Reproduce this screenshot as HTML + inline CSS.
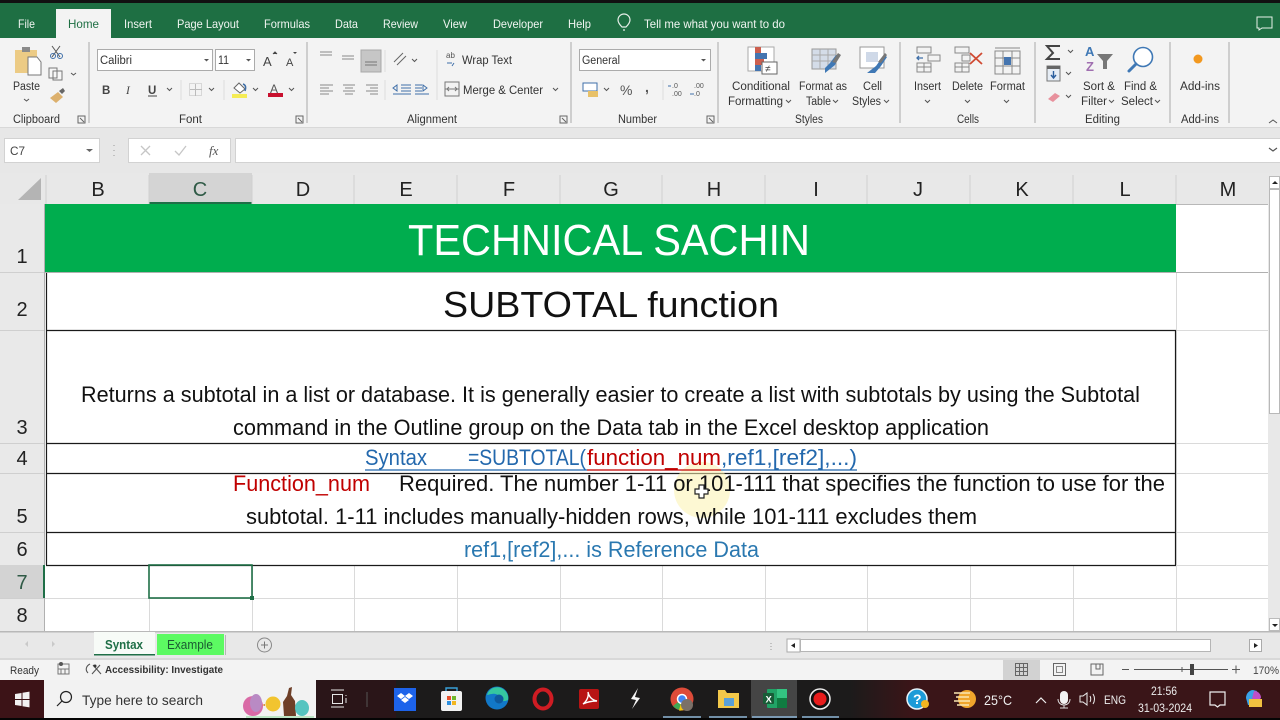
<!DOCTYPE html>
<html><head><meta charset="utf-8"><style>
html,body{margin:0;padding:0;background:#fff;width:1280px;height:720px;overflow:hidden}
svg{display:block;font-family:"Liberation Sans",sans-serif}
.r{font-size:11.5px;fill:#333}
.t{font-size:12px;fill:#f0f5f1}
.c{font-size:24px;fill:#111}
.h{font-size:20px;fill:#222}
.l{stroke:#dadada;stroke-width:1}
.b{stroke:#1a1a1a;stroke-width:1.2}
.i{fill:none;stroke:#666;stroke-width:1}
.ch{fill:none;stroke:#555;stroke-width:1}
</style></head><body>
<svg width="1280" height="720" viewBox="0 0 1280 720" xmlns="http://www.w3.org/2000/svg">
<defs><linearGradient id="tb" x1="0" x2="1" y1="0" y2="0"><stop offset="0" stop-color="#1c1b1b"/><stop offset="1" stop-color="#3a1518"/></linearGradient></defs>
<rect width="1280" height="720" fill="#fff"/>
<!-- title/tabs -->
<rect y="2" width="1280" height="36" fill="#1e6f43"/>
<rect width="1280" height="3" fill="#111"/>
<rect x="56" y="9" width="55" height="30" fill="#f3f3f3"/>
<rect y="38" width="1280" height="89" fill="#f3f3f3"/>
<g class="t">
<text x="18" y="28" textLength="17" lengthAdjust="spacingAndGlyphs">File</text>
<text x="68" y="28" textLength="31" lengthAdjust="spacingAndGlyphs" style="fill:#1e6f43">Home</text>
<text x="124" y="28" textLength="28" lengthAdjust="spacingAndGlyphs">Insert</text>
<text x="177" y="28" textLength="62" lengthAdjust="spacingAndGlyphs">Page Layout</text>
<text x="264" y="28" textLength="46" lengthAdjust="spacingAndGlyphs">Formulas</text>
<text x="335" y="28" textLength="23" lengthAdjust="spacingAndGlyphs">Data</text>
<text x="383" y="28" textLength="35" lengthAdjust="spacingAndGlyphs">Review</text>
<text x="443" y="28" textLength="24" lengthAdjust="spacingAndGlyphs">View</text>
<text x="493" y="28" textLength="50" lengthAdjust="spacingAndGlyphs">Developer</text>
<text x="568" y="28" textLength="23" lengthAdjust="spacingAndGlyphs">Help</text>
<text x="644" y="28" textLength="141" lengthAdjust="spacingAndGlyphs">Tell me what you want to do</text>
</g>
<path d="M622 27c-3-3-4-5-4-7a6 6 0 0 1 12 0c0 2-1 4-4 7zM623 30h2" fill="none" stroke="#e8f0ea" stroke-width="1.2"/>
<path d="M1257 17h15v11h-10l-3 2v-2h-2z" fill="none" stroke="#e8f0ea" stroke-width="1"/>
<!-- ribbon separators -->
<g stroke="#b5b5b5" stroke-width="1.2">
<path d="M89 42v81M307 42v81M571 42v81M718 42v81M900 42v81M1035 42v81M1170 42v81M1229 42v81"/>
</g>
<g stroke="#dcdcdc"><path d="M385 50v22M385 80v20M181 80v20M224 80v20M437 50v50M663 80v20"/></g>
<!-- Clipboard -->
<rect x="15" y="50" width="22" height="23" fill="#eccb85"/>
<rect x="22" y="47" width="8" height="5" fill="#8a8a8a"/>
<path d="M28 57h9l4 5v13H28z" fill="#fff" stroke="#777"/>
<text class="r" x="13" y="90" textLength="27" lengthAdjust="spacingAndGlyphs">Paste</text>
<path class="ch" d="M24 99l2.500 2 2.500-2"/>
<path d="M52 46l8 11M60 46l-8 11" stroke="#555" fill="none"/>
<circle cx="53" cy="56" r="2.500" fill="none" stroke="#3f6fa8"/><circle cx="60" cy="56" r="2.500" fill="none" stroke="#3f6fa8"/>
<path d="M49 68h8v10h-8zM53 71h9v9h-9z" fill="#f7f7f7" stroke="#777"/>
<path class="ch" d="M71 73l2.500 2 2.500-2"/>
<path d="M50 98l8-6 5 5-7 6z" fill="#dcb06d"/><path d="M59 91l4-3 2 3-3 3z" fill="#666"/>
<text class="r" x="13" y="123" textLength="47" lengthAdjust="spacingAndGlyphs">Clipboard</text>
<path d="M78 116h7v7h-7zM80 118l4 4" fill="none" stroke="#666"/>
<!-- Font -->
<rect x="97.500" y="49.500" width="115" height="21" fill="#fff" stroke="#ababab"/>
<text class="r" x="100" y="64" textLength="32" lengthAdjust="spacingAndGlyphs">Calibri</text>
<path d="M204 59l2.500 2.500 2.500-2.500z" fill="#555"/>
<rect x="215.500" y="49.500" width="39" height="21" fill="#fff" stroke="#ababab"/>
<text class="r" x="218" y="64" textLength="11" lengthAdjust="spacingAndGlyphs">11</text>
<path d="M246 59l2.500 2.500 2.500-2.500z" fill="#555"/>
<text x="263" y="66" font-size="13" fill="#444">A</text><path d="M273 54l2-2 2 2" fill="#444" stroke="#444"/>
<text x="286" y="66" font-size="11" fill="#444">A</text><path d="M293 52h4l-2 2z" fill="#444"/>
<text x="102" y="94" font-size="11.500" font-weight="bold" fill="#444">B</text>
<text x="126" y="94" font-size="11.500" font-style="italic" font-family="Liberation Serif" fill="#444">I</text>
<text x="148" y="94" font-size="11.500" fill="#444" font-weight="bold">U</text><path d="M148 96h9" stroke="#444"/>
<path class="ch" d="M167 88l2.500 2.500 2.500-2.500M209 88l2.500 2.500 2.500-2.500M253 88l2.500 2.500 2.500-2.500M289 88l2.500 2.500 2.500-2.500"/>
<rect x="189.500" y="83.500" width="12" height="12" fill="none" stroke="#bbb" stroke-dasharray="1 1"/><path d="M195.500 84v12M190 89.500h12" stroke="#bbb"/>
<path d="M234 88l5-5 6 6-5 4z" fill="#fff" stroke="#666"/><path d="M243 84c3 1 3 4 2 7" stroke="#3f6fa8" stroke-width="1.500" fill="none"/>
<rect x="232" y="94" width="15" height="4" fill="#f5ec55"/>
<text x="270" y="93" font-size="12" fill="#555">A</text><rect x="268" y="93" width="15" height="4" fill="#c8102e"/>
<text class="r" x="179" y="123" textLength="23" lengthAdjust="spacingAndGlyphs">Font</text>
<path d="M296 116h7v7h-7zM298 118l4 4" fill="none" stroke="#666"/>
<!-- Alignment -->
<g stroke="#8a8a8a" fill="none">
<path d="M320 52h12M320 55h12M342 56h12M342 59h12"/>
<path d="M320 85h13M320 88h9M320 91h13M320 94h9M343 85h12M345 88h8M343 91h12M345 94h8M366 85h12M370 88h8M366 91h12M370 94h8"/>
</g>
<rect x="361" y="50" width="20" height="22" fill="#c6c6c6" stroke="#a8a8a8"/>
<path d="M365 62h12M365 65h12" stroke="#777"/>
<path d="M394 62l9-9M397 65l9-9" stroke="#666" fill="none"/><path d="M412 59l2.500 2.500 2.500-2.500" class="ch"/>
<path d="M393 88l4-3v6zM401 85h10M401 88h10M401 91h10M393 94h18" stroke="#3f6fa8" fill="none"/>
<path d="M427 88l-4-3v6zM415 85h7M415 88h7M415 91h7M415 94h14" stroke="#3f6fa8" fill="none"/>
<text x="446" y="58" font-size="8" fill="#555">ab</text><path d="M447 63h5M454 63l-2 3" stroke="#3f6fa8" fill="none"/>
<text class="r" x="462" y="64" textLength="50" lengthAdjust="spacingAndGlyphs">Wrap Text</text>
<rect x="445" y="82" width="14" height="14" fill="none" stroke="#777"/><path d="M445 89h14M449 87l-2 2 2 2M455 87l2 2-2 2" stroke="#777" fill="none"/>
<text class="r" x="463" y="94" textLength="80" lengthAdjust="spacingAndGlyphs">Merge &amp; Center</text>
<path class="ch" d="M553 88l2.500 2.500 2.500-2.500"/>
<text class="r" x="407" y="123" textLength="50" lengthAdjust="spacingAndGlyphs">Alignment</text>
<path d="M560 116h7v7h-7zM562 118l4 4" fill="none" stroke="#666"/>
<!-- Number -->
<rect x="579.500" y="49.500" width="131" height="21" fill="#fff" stroke="#ababab"/>
<text class="r" x="582" y="64" textLength="38" lengthAdjust="spacingAndGlyphs">General</text>
<path d="M701 59l2.500 2.500 2.500-2.500z" fill="#555"/>
<rect x="583" y="83" width="14" height="8" fill="#fff" stroke="#3f6fa8"/><rect x="588" y="91" width="10" height="6" fill="#e8c168"/>
<path class="ch" d="M604 88l2.500 2.500 2.500-2.500"/>
<text x="620" y="95" font-size="14" fill="#555">%</text>
<text x="645" y="92" font-size="14" font-weight="bold" fill="#555">,</text>
<text x="672" y="88" font-size="7" fill="#555">.0</text><text x="672" y="96" font-size="7" fill="#555">.00</text>
<text x="694" y="88" font-size="7" fill="#555">.00</text><text x="694" y="96" font-size="7" fill="#555">.0</text>
<path d="M671 86h-3M690 94h4" stroke="#3f6fa8"/>
<text class="r" x="618" y="123" textLength="39" lengthAdjust="spacingAndGlyphs">Number</text>
<path d="M707 116h7v7h-7zM709 118l4 4" fill="none" stroke="#666"/>
<!-- Styles -->
<rect x="748" y="47" width="26" height="24" fill="#fff" stroke="#aaa"/>
<rect x="755" y="47" width="6" height="6" fill="#cc5f4f"/><rect x="755" y="53" width="12" height="6" fill="#4575b0"/><rect x="755" y="59" width="9" height="6" fill="#cc5f4f"/><rect x="755" y="65" width="6" height="6" fill="#4575b0"/>
<rect x="762" y="62" width="15" height="12" fill="#fff" stroke="#666"/><text x="765" y="72" font-size="10" fill="#444">≠</text>
<text class="r" x="732" y="90" textLength="58" lengthAdjust="spacingAndGlyphs">Conditional</text>
<text class="r" x="728" y="105" textLength="55" lengthAdjust="spacingAndGlyphs">Formatting</text><path class="ch" d="M786 100l2.500 2.500 2.500-2.500"/>
<rect x="812" y="49" width="24" height="20" fill="#d4dce8" stroke="#999"/><path d="M812 55h24M812 61h24M820 49v20M828 49v20" stroke="#aaa"/>
<path d="M825 73l10-8 4-9 -3-1-6 8-5 5z" fill="#3f78b5"/><path d="M832 62l6-9 3 2-5 8z" fill="#777"/>
<text class="r" x="799" y="90" textLength="48" lengthAdjust="spacingAndGlyphs">Format as</text>
<text class="r" x="806" y="105" textLength="25" lengthAdjust="spacingAndGlyphs">Table</text><path class="ch" d="M833 100l2.500 2.500 2.500-2.500"/>
<rect x="860" y="47" width="24" height="21" fill="#fff" stroke="#999"/><rect x="866" y="52" width="12" height="10" fill="#cfd9e8"/>
<path d="M867 73l9-7 8-11 3 2-6 9-6 7z" fill="#3f78b5"/><path d="M878 62l7-9 2 2-6 8z" fill="#777"/>
<text class="r" x="863" y="90" textLength="19" lengthAdjust="spacingAndGlyphs">Cell</text>
<text class="r" x="852" y="105" textLength="29" lengthAdjust="spacingAndGlyphs">Styles</text><path class="ch" d="M884 100l2.500 2.500 2.500-2.500"/>
<text class="r" x="795" y="123" textLength="28" lengthAdjust="spacingAndGlyphs">Styles</text>
<!-- Cells -->
<g fill="none" stroke="#888">
<rect x="917" y="47" width="14" height="6"/><rect x="928" y="55" width="12" height="6"/><rect x="917" y="63" width="14" height="9"/><path d="M924 63v9M917 67h14"/>
<rect x="955" y="47" width="14" height="6"/><rect x="962" y="55" width="8" height="6"/><rect x="955" y="63" width="14" height="9"/><path d="M962 63v9M955 67h14"/>
<rect x="995" y="51" width="25" height="23"/><path d="M995 48h25M1003 51v23M1012 51v23M995 58h25M995 66h25"/>
</g>
<path d="M923 58h-6M919 56l-2 2 2 2" stroke="#3f6fa8" fill="none" stroke-width="1.300"/>
<path d="M970 53l12 11M982 53l-12 11" stroke="#d04a32" stroke-width="1.800"/>
<rect x="1004" y="57" width="7" height="8" fill="#4575b0"/>
<text class="r" x="914" y="90" textLength="27" lengthAdjust="spacingAndGlyphs">Insert</text>
<text class="r" x="952" y="90" textLength="31" lengthAdjust="spacingAndGlyphs">Delete</text>
<text class="r" x="990" y="90" textLength="35" lengthAdjust="spacingAndGlyphs">Format</text>
<path class="ch" d="M925 100l2.500 2.500 2.500-2.500M965 100l2.500 2.500 2.500-2.500M1004 100l2.500 2.500 2.500-2.500"/>
<text class="r" x="957" y="123" textLength="22" lengthAdjust="spacingAndGlyphs">Cells</text>
<!-- Editing -->
<path d="M1060 46h-13l6 7-6 6h13" fill="none" stroke="#444" stroke-width="2"/>
<path class="ch" d="M1068 50l2.500 2.500 2.500-2.500M1066 72l2.500 2.500 2.500-2.500M1066 95l2.500 2.500 2.500-2.500"/>
<rect x="1047" y="66" width="13" height="15" fill="#e6edf5" stroke="#777"/><rect x="1047" y="66" width="13" height="3" fill="#666"/><path d="M1053.500 71v7M1051 75l2.500 3 2.500-3" stroke="#2c5f9e" fill="none" stroke-width="1.400"/>
<path d="M1048 99l7-6 5 3-7 6z" fill="#e8919d"/>
<text x="1085" y="56" font-size="13" fill="#3f78b5" font-weight="bold">A</text><text x="1086" y="71" font-size="13" fill="#a06fb0" font-weight="bold">Z</text>
<path d="M1097 54h16l-6 7v8h-4v-8z" fill="#777"/>
<text class="r" x="1083" y="90" textLength="32" lengthAdjust="spacingAndGlyphs">Sort &amp;</text>
<text class="r" x="1081" y="105" textLength="26" lengthAdjust="spacingAndGlyphs">Filter</text><path class="ch" d="M1109 100l2.500 2.500 2.500-2.500"/>
<circle cx="1143" cy="57" r="9.500" fill="#fff" stroke="#3f78b5" stroke-width="1.600"/><path d="M1136 64l-7 7" stroke="#3f78b5" stroke-width="3" stroke-linecap="round"/>
<text class="r" x="1124" y="90" textLength="33" lengthAdjust="spacingAndGlyphs">Find &amp;</text>
<text class="r" x="1121" y="105" textLength="32" lengthAdjust="spacingAndGlyphs">Select</text><path class="ch" d="M1155 100l2.500 2.500 2.500-2.500"/>
<text class="r" x="1085" y="123" textLength="35" lengthAdjust="spacingAndGlyphs">Editing</text>
<!-- Add-ins -->
<circle cx="1198" cy="59" r="4.500" fill="#f2981f"/>
<text class="r" x="1180" y="90" textLength="40" lengthAdjust="spacingAndGlyphs">Add-ins</text>
<text class="r" x="1181" y="123" textLength="38" lengthAdjust="spacingAndGlyphs">Add-ins</text>
<path d="M1269 123l4-3 4 3" fill="none" stroke="#555"/>
<!-- formula bar -->
<rect y="127" width="1280" height="46" fill="#e7e7e7"/>
<rect y="127" width="1280" height="1" fill="#d8d8d8"/>
<rect x="4.500" y="138.500" width="95" height="24" fill="#fff" stroke="#d2d2d2"/>
<text class="r" x="10" y="155" textLength="15" lengthAdjust="spacingAndGlyphs" style="fill:#444">C7</text>
<path d="M86 149l3.500 3 3.500-3z" fill="#666"/>
<path d="M114 145v1M114 150v1M114 155v1" stroke="#999"/>
<rect x="128.500" y="138.500" width="102" height="24" fill="#fff" stroke="#d2d2d2"/>
<path d="M141 146l9 9M150 146l-9 9" stroke="#c6c6c6" stroke-width="1.300"/>
<path d="M175 151l4 4 7-9" fill="none" stroke="#c6c6c6" stroke-width="1.300"/>
<text x="209" y="155" font-family="Liberation Serif" font-style="italic" font-size="13" fill="#555">fx</text>
<rect x="235.500" y="138.500" width="1045" height="24" fill="#fff" stroke="#d2d2d2"/>
<path d="M1269 148l4 3 4-3" fill="none" stroke="#555" stroke-width="1.200"/>
<!-- headers -->
<rect y="173" width="1268" height="31" fill="#e8e8e8"/>
<rect y="204" width="44" height="428" fill="#e9e9e9"/>
<path d="M41 178v22H18z" fill="#b4b4b4"/>
<rect x="149" y="173" width="103" height="30" fill="#d4d4d4"/>
<rect x="149" y="202" width="103" height="2" fill="#1f6f47"/>
<g stroke="#cfcfcf">
<path d="M46 175v29M149 175v29M252 175v29M354 175v29M457 175v29M560 175v29M662 175v29M765 175v29M867 175v29M970 175v29M1073 175v29M1176 175v29"/>
<path d="M0 272.500h44M0 330.500h44M0 443.500h44M0 473.500h44M0 532.500h44M0 565.500h44M0 598.500h44"/>
</g>
<path d="M44.500 204v428" stroke="#b0b0b0" stroke-width="1"/>
<rect y="565" width="43" height="33" fill="#d3d3d3"/>
<rect x="43" y="565" width="2" height="33" fill="#1f6f47"/>
<g class="h" text-anchor="middle">
<text x="98" y="196">B</text><text x="200" y="196" style="fill:#2f5a46">C</text><text x="303" y="196">D</text><text x="406" y="196">E</text><text x="509" y="196">F</text><text x="611" y="196">G</text><text x="714" y="196">H</text><text x="816" y="196">I</text><text x="918" y="196">J</text><text x="1022" y="196">K</text><text x="1125" y="196">L</text><text x="1228" y="196">M</text>
<text x="22" y="263">1</text><text x="22" y="316">2</text><text x="22" y="434">3</text><text x="22" y="465">4</text><text x="22" y="523">5</text><text x="22" y="556">6</text><text x="22" y="589" style="fill:#2f5a46">7</text><text x="22" y="622">8</text>
</g>
<!-- grid -->
<g class="l">
<path d="M45 598.500h1223M1176 272.500h92M1176 330.500h92M1176 443.500h92M1176 473.500h92M1176 532.500h92M1176 565.500h92"/>
<path d="M149.500 598v33M252.500 565v66M354.500 565v66M457.500 565v66M560.500 565v66M662.500 565v66M765.500 565v66M867.500 565v66M970.500 565v66M1073.500 565v66M1176.500 272v359M1268.500 204v427"/>
<path d="M1176 204.500h92" stroke="#b8b8b8"/>
</g>
<rect x="45" y="204" width="1131" height="68" fill="#00ad4e"/>
<rect x="45" y="272" width="1223" height="1" fill="#b0b0b0"/>
<!-- cell borders -->
<g class="b" fill="none">
<path d="M46.500 273v292M46 330.500h1130M46 443.500h1130M46 473.500h1130M46 532.500h1130M46 565.500h1130M1175.500 330v235"/>
</g>
<!-- cursor highlight -->
<circle cx="702" cy="490" r="28" fill="#fbf3ae" opacity=".55"/>
<!-- cell text -->
<text x="408" y="255" font-size="44" fill="#fff" textLength="402" lengthAdjust="spacingAndGlyphs">TECHNICAL SACHIN</text>
<text x="443" y="317" font-size="36" fill="#111" textLength="336" lengthAdjust="spacingAndGlyphs">SUBTOTAL function</text>
<g class="c" style="font-size:22px">
<text x="81" y="402" textLength="1059" lengthAdjust="spacingAndGlyphs">Returns a subtotal in a list or database. It is generally easier to create a list with subtotals by using the Subtotal</text>
<text x="233" y="435" textLength="756" lengthAdjust="spacingAndGlyphs">command in the Outline group on the Data tab in the Excel desktop application</text>
<text x="365" y="465" textLength="62" lengthAdjust="spacingAndGlyphs" style="fill:#2368ad">Syntax</text>
<text x="468" y="465" textLength="118" lengthAdjust="spacingAndGlyphs" style="fill:#2368ad">=SUBTOTAL(</text>
<text x="587" y="465" textLength="134" lengthAdjust="spacingAndGlyphs" style="fill:#c00000">function_num</text>
<text x="721" y="465" textLength="136" lengthAdjust="spacingAndGlyphs" style="fill:#2368ad">,ref1,[ref2],...)</text>
<text x="233" y="491" textLength="137" lengthAdjust="spacingAndGlyphs" style="fill:#c00000">Function_num</text>
<text x="399" y="491" textLength="766" lengthAdjust="spacingAndGlyphs">Required. The number 1-11 or 101-111 that specifies the function to use for the</text>
<text x="246" y="524" textLength="731" lengthAdjust="spacingAndGlyphs">subtotal. 1-11 includes manually-hidden rows, while 101-111 excludes them</text>
<text x="464" y="557" textLength="295" lengthAdjust="spacingAndGlyphs" style="fill:#2a78b0">ref1,[ref2],... is Reference Data</text>
</g>
<path d="M365 470h222" stroke="#2368ad" stroke-width="1.300"/>
<path d="M587 470h134" stroke="#c00000" stroke-width="1.300"/>
<path d="M721 470h136" stroke="#2368ad" stroke-width="1.300"/>
<!-- selection -->
<rect x="149" y="565" width="103" height="33" fill="none" stroke="#1f6f47" stroke-width="1.600"/>
<rect x="250" y="596" width="4" height="4" fill="#1f6f47"/>
<path d="M699 485h5v4h4v5h-4v4h-5v-4h-4v-5h4z" fill="#fff" stroke="#222" stroke-width="1.200"/>
<!-- scrollbar -->
<rect x="1268" y="173" width="12" height="459" fill="#e8e8e8"/>
<rect x="1269.500" y="176.500" width="10" height="12" fill="#fff" stroke="#bbb"/>
<path d="M1272 184l3-3 3 3z" fill="#222"/>
<rect x="1269.500" y="189.500" width="10" height="224" fill="#fff" stroke="#b8b8b8"/>
<rect x="1269.500" y="618.500" width="10" height="12" fill="#fff" stroke="#bbb"/>
<path d="M1272 624l3 3 3-3z" fill="#222"/>
<!-- sheet tabs -->
<rect y="631" width="1280" height="28" fill="#e8e8e8"/>
<rect y="631" width="1280" height="1.500" fill="#b8b8b8"/>
<rect y="658" width="1280" height="2" fill="#d8d8d8"/>
<path d="M28 641l-3 3 3 3zM52 641l3 3-3 3z" fill="#c9c9c9"/>
<rect x="94" y="632" width="61" height="22" fill="#f7fbf7"/>
<rect x="94" y="654" width="61" height="1.500" fill="#1f6f47"/>
<rect x="157" y="634" width="67" height="21" fill="#5cfa62"/>
<path d="M225.500 635v20" stroke="#b5b5b5"/>
<text x="105" y="649" font-size="12.500" font-weight="bold" fill="#1f6f47" textLength="38" lengthAdjust="spacingAndGlyphs">Syntax</text>
<text x="167" y="649" font-size="12.500" fill="#1b5a32" textLength="46" lengthAdjust="spacingAndGlyphs">Example</text>
<circle cx="264.500" cy="645" r="7" fill="none" stroke="#888"/><path d="M261 645h7M264.500 641.500v7" stroke="#777"/>
<path d="M771 643v1M771 646v1M771 649v1" stroke="#999"/>
<rect x="787" y="639" width="13" height="13" fill="#fff" stroke="#aaa"/>
<path d="M795 643l-4 2.500 4 2.500z" fill="#222"/>
<rect x="800.500" y="639.500" width="410" height="12" fill="#fff" stroke="#b5b5b5"/>
<rect x="1249.500" y="639.500" width="12" height="12" fill="#fff" stroke="#aaa"/>
<path d="M1254 643l4 2.500-4 2.500z" fill="#222"/>
<!-- status bar -->
<rect y="660" width="1280" height="20" fill="#f3f3f3"/>
<text x="10" y="674" font-size="11" fill="#333" textLength="29" lengthAdjust="spacingAndGlyphs">Ready</text>
<rect x="58" y="664" width="11" height="10" fill="none" stroke="#777"/><path d="M58 669h11M61 669v5M65 669v5" stroke="#777"/><circle cx="61" cy="664" r="2" fill="#555"/>
<path d="M90 664c-4 2-5 6-2 9M93 665l8 9M100 665l-8 9" fill="none" stroke="#555" stroke-width="1.100"/><circle cx="95" cy="666" r="1.500" fill="#333"/>
<text x="105" y="673" font-size="10.500" font-weight="bold" fill="#333" textLength="118" lengthAdjust="spacingAndGlyphs">Accessibility: Investigate</text>
<rect x="1003" y="660" width="37" height="20" fill="#d2d2d2"/>
<rect x="1015.500" y="663.500" width="12" height="12" fill="none" stroke="#666"/><path d="M1015 667.500h12M1015 671.500h12M1019.500 663v12M1023.500 663v12" stroke="#666"/>
<rect x="1053.500" y="663.500" width="12" height="12" fill="none" stroke="#666"/><rect x="1056.500" y="666.500" width="6" height="6" fill="none" stroke="#888"/>
<path d="M1091 664h12v11h-12zM1096 664v5h4v-5" fill="none" stroke="#666"/>
<path d="M1122 669.500h7M1134 669.500h94M1182 667v5M1232 669.500h8M1236 665.500v8" stroke="#555"/>
<rect x="1190" y="664" width="4" height="11" fill="#444"/>
<text x="1253" y="674" font-size="11" fill="#444" textLength="26" lengthAdjust="spacingAndGlyphs">170%</text>
<!-- taskbar -->
<rect y="680" width="1280" height="38" fill="#1c1b1b"/>
<rect x="0" y="680" width="44" height="38" fill="#3c1317"/>
<rect x="316" y="680" width="80" height="38" fill="#2a1518"/>
<rect x="850" y="680" width="60" height="38" fill="url(#tb)"/>
<rect x="910" y="680" width="370" height="38" fill="#3a1518"/>
<rect y="718" width="1280" height="2" fill="#050505"/>
<path d="M15 694l6.500-1v6H15zM22.500 692.800l7-1.200v7.400h-7zM15 700h6.500v6L15 705zM22.500 700h7v7.400l-7-1.200z" fill="#f2f2f2"/>
<rect x="44" y="680" width="272" height="38" fill="#f2f2f2"/>
<circle cx="66" cy="697" r="5.500" fill="none" stroke="#222" stroke-width="1.200"/><path d="M62 701l-5 5" stroke="#222" stroke-width="1.200"/>
<text x="82" y="705" font-size="14" fill="#333" textLength="121" lengthAdjust="spacingAndGlyphs">Type here to search</text>
<!-- easter -->
<ellipse cx="253" cy="706" rx="10" ry="10" fill="#d96aa6"/>
<ellipse cx="256" cy="703" rx="6" ry="9" fill="#b98ac4"/>
<circle cx="273" cy="704" r="7.500" fill="#f2c42f"/><path d="M265 704l-3 1 3 1z" fill="#d97f20"/>
<path d="M284 716l-1-14 4-6 2-8 3-1-1 8 4 6 1 15z" fill="#6e3f28"/>
<ellipse cx="302" cy="708" rx="7" ry="8" fill="#55c4c0"/>
<path d="M246 716h68v2h-68z" fill="#bde5c5"/>
<!-- task icons -->
<path d="M331 690h13M331 707h13" stroke="#e6e6e6"/><rect x="332.500" y="694.500" width="10" height="9" fill="none" stroke="#e6e6e6"/><path d="M346 695v1M346 698v5" stroke="#e6e6e6"/>
<path d="M367 692v15" stroke="#555"/>
<rect x="394" y="688" width="22" height="23" fill="#1d63ea"/>
<path d="M401 693l4 3-4 3-4-3zM409 693l4 3-4 3-4-3zM401 700l4-3 4 3-4 3z" fill="#fff"/>
<rect x="441" y="691" width="21" height="20" rx="2" fill="#f2f2f2"/><path d="M446 691v-3h11v3" fill="none" stroke="#38a0d8" stroke-width="1.400"/>
<rect x="447" y="696" width="4" height="4" fill="#e8502c"/><rect x="452" y="696" width="4" height="4" fill="#6fb82c"/><rect x="447" y="701" width="4" height="4" fill="#2e90e0"/><rect x="452" y="701" width="4" height="4" fill="#f2b620"/>
<circle cx="497" cy="698" r="11.500" fill="#1278c8"/><path d="M487 695c2-7 9-9 14-7 5 2 8 7 7 12-4 2-9 1-10-1 3-3-2-6-6-5-2 0-4 1-5 1z" fill="#35c7a0"/><circle cx="499" cy="699" r="4.500" fill="#0e5a9e"/>
<ellipse cx="543" cy="699" rx="8.500" ry="9.500" fill="none" stroke="#cf1c23" stroke-width="4"/>
<rect x="579" y="689" width="20" height="20" rx="2" fill="#b81414"/><path d="M583 704c4-3 6-8 5-12 1 5 4 8 9 9-5 0-10 1-14 3z" fill="none" stroke="#fff" stroke-width="1.400"/>
<path d="M638 688l-7 11 5 1-4 9 8-11-5-1z" fill="#f5f5f5"/>
<circle cx="682" cy="699" r="11.500" fill="#dd4b39"/><path d="M682 699l10 5a11.500 11.500 0 0 1-19 2z" fill="#3fa854"/><path d="M682 699l-3 11.500a11.500 11.500 0 0 0 11-5z" fill="#f4c20d"/><circle cx="682" cy="699" r="4.500" fill="#4285f4" stroke="#fff" stroke-width="1.500"/>
<circle cx="687" cy="705" r="6" fill="#7a7068"/>
<path d="M718 690h7l2 3h12v15h-21z" fill="#f2c84a"/><rect x="724" y="698" width="10" height="8" fill="#5aa0d8"/>
<rect x="751" y="680" width="46" height="38" fill="#454545"/>
<rect x="767" y="689" width="20" height="19" rx="1" fill="#21a366"/><rect x="777" y="689" width="10" height="9" fill="#33c481"/><rect x="777" y="698" width="10" height="10" fill="#107c41"/>
<rect x="763" y="693" width="11" height="11" rx="1" fill="#185c37"/><text x="765.500" y="702.500" font-size="9.500" font-weight="bold" fill="#fff">X</text>
<circle cx="820" cy="699" r="10" fill="#111" stroke="#eee" stroke-width="1.500"/><circle cx="820" cy="699" r="6.500" fill="#e81c1c"/>
<path d="M663 717h38M709 717h38M752 717h45M802 717h37" stroke="#8fb7d8" stroke-width="1.500"/>
<!-- tray -->
<circle cx="917" cy="699" r="10" fill="#1c9bd8" stroke="#e8f4fa" stroke-width="1.500"/><text x="913" y="704" font-size="14" font-weight="bold" fill="#fff">?</text><circle cx="925" cy="704" r="4" fill="#f2b620"/>
<circle cx="967" cy="699" r="9" fill="#f0a52c"/>
<path d="M954 693h16M956 697h13M954 701h16M957 705h12" stroke="#fbe6b0" stroke-width="1.500"/>
<text x="984" y="705" font-size="14" fill="#eee" textLength="28" lengthAdjust="spacingAndGlyphs">25°C</text>
<path d="M1036 703l5-5 5 5" fill="none" stroke="#eee" stroke-width="1.200"/>
<rect x="1060" y="691" width="8" height="13" rx="4" fill="#f2f2f2"/><path d="M1058 699c0 8 12 8 12 0M1064 705v3M1060 708h8" fill="none" stroke="#ddd"/>
<path d="M1080 696h3l4-3v12l-4-3h-3z" fill="none" stroke="#eee"/><path d="M1090 696c1 2 1 4 0 6M1093 694c2 3 2 7 0 10" fill="none" stroke="#eee"/>
<text x="1104" y="704" font-size="12" fill="#eee" textLength="22" lengthAdjust="spacingAndGlyphs">ENG</text>
<text x="1151" y="695" font-size="11.500" fill="#eee" textLength="26" lengthAdjust="spacingAndGlyphs">21:56</text>
<text x="1138" y="712" font-size="11.500" fill="#eee" textLength="54" lengthAdjust="spacingAndGlyphs">31-03-2024</text>
<path d="M1210 692h15v13h-5l-2.500 2-2.500-2h-5z" fill="none" stroke="#eee" stroke-width="1.200"/>
<path d="M1246 698c0-5 4-8 7-8l4 1-5 8 1 6h-5z" fill="#3aa2e8"/><path d="M1254 691c4 0 7 3 7 7l-3 3-6-2z" fill="#c04fc8"/><rect x="1249" y="699" width="13" height="8" fill="#f0c040"/>
</svg>
</body></html>
